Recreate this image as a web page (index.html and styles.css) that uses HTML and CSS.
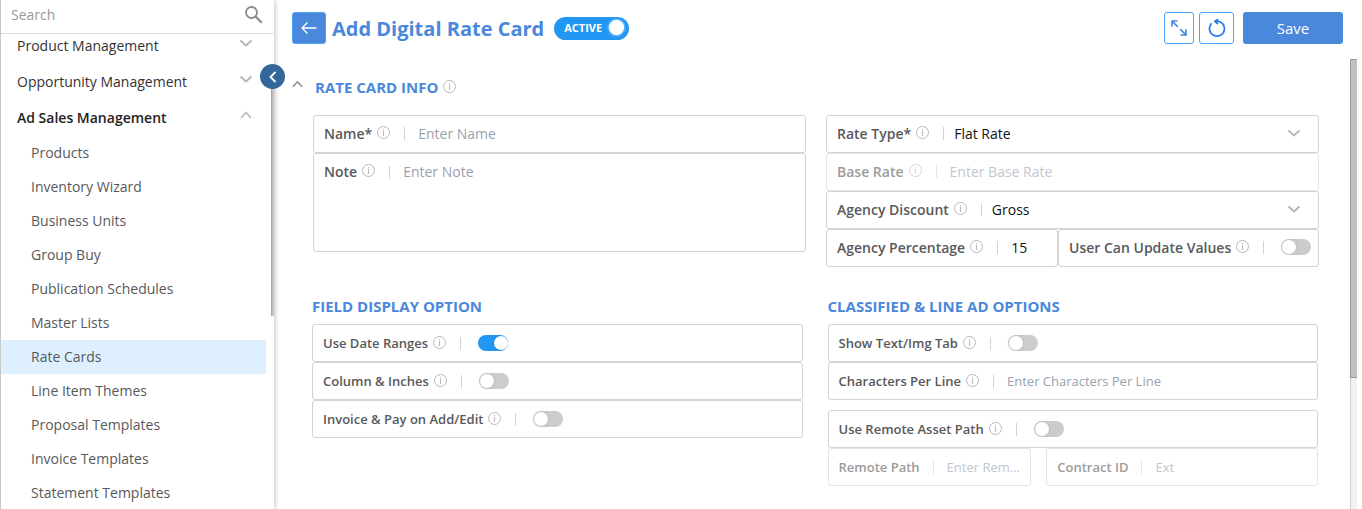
FILE: index.html
```html
<!DOCTYPE html>
<html lang="en">
<head>
    <meta charset="UTF-8">
    <meta name="viewport" content="width=device-width, initial-scale=1.0">
    <title>Add Digital Rate Card</title>
    <link rel="stylesheet" href="styles.css">
</head>
<body>
    <!-- shared icons -->
    <svg class="sprite" aria-hidden="true">
        <symbol id="info" viewBox="0 0 13 13">
            <circle cx="6.500" cy="6.500" r="6" fill="none" stroke="currentColor"/>
            <path d="M6.500 5v5M6.500 3v1.200" fill="none" stroke="currentColor" stroke-width="1.100"/>
        </symbol>
        <symbol id="down" viewBox="0 0 14 8">
            <path d="M1.500 1.500L7 6.500l5.500-5" fill="none" stroke="currentColor" stroke-width="1.900"/>
        </symbol>
        <symbol id="up" viewBox="0 0 12 8">
            <path d="M1 7l5-5.500L11 7" fill="none" stroke="currentColor" stroke-width="1.500"/>
        </symbol>
    </svg>

    <aside class="sidebar">
        <div class="search">
            <input type="search" placeholder="Search" aria-label="Search">
            <svg width="18" height="18" viewBox="0 0 18 18"><circle cx="6.500" cy="6.500" r="5.500" fill="none" stroke="#8c8c8c" stroke-width="1.800"/><path d="M10.500 10.500l6.300 6.300" stroke="#8c8c8c" stroke-width="2.200"/></svg>
        </div>
        <nav class="menu">
            <a class="group" href="#">Product Management <svg class="chev"><use href="#down"/></svg></a>
            <a class="group" href="#">Opportunity Management <svg class="chev"><use href="#down"/></svg></a>
            <a class="group open" href="#">Ad Sales Management <svg class="chev"><use href="#up"/></svg></a>
            <a class="item" href="#">Products</a>
            <a class="item" href="#">Inventory Wizard</a>
            <a class="item" href="#">Business Units</a>
            <a class="item" href="#">Group Buy</a>
            <a class="item" href="#">Publication Schedules</a>
            <a class="item" href="#">Master Lists</a>
            <a class="item selected" href="#">Rate Cards</a>
            <a class="item" href="#">Line Item Themes</a>
            <a class="item" href="#">Proposal Templates</a>
            <a class="item" href="#">Invoice Templates</a>
            <a class="item" href="#">Statement Templates</a>
        </nav>
        <div class="side-thumb"></div>
        <button class="collapse" aria-label="Collapse menu">
            <svg width="8" height="12" viewBox="0 0 8 12"><path d="M6.500 1L1.500 6l5 5" fill="none" stroke="#fff" stroke-width="1.800"/></svg>
        </button>
    </aside>

    <main class="main">
        <header class="topbar">
            <button class="btn back" aria-label="Back">
                <svg width="16" height="12" viewBox="0 0 16 12"><path d="M6.500 .5L1 6l5.500 5.500M1 6h14.500" fill="none" stroke="#fff" stroke-width="1.300"/></svg>
            </button>
            <h1>Add Digital Rate Card</h1>
            <label class="active-switch"><input type="checkbox" checked>ACTIVE</label>
            <div class="actions">
                <button class="btn outline" aria-label="Expand">
                    <svg width="16" height="16" viewBox="0 0 16 16"><path d="M1 6.500V1h5.500M1 1l5.800 5.800M15 9.500V15H9.500M15 15L9.200 9.200" fill="none" stroke="#4a88dc" stroke-width="1.700"/></svg>
                </button>
                <button class="btn outline wide" aria-label="Reset">
                    <svg width="18" height="18" viewBox="0 0 18 18"><path d="M3.500 4.400A7.500 7.500 0 1 0 8 2.100M10.300 0L7 2.300l3 2.700" fill="none" stroke="#2b7de9" stroke-width="1.800"/></svg>
                </button>
                <button class="btn save">Save</button>
            </div>
        </header>

        <div class="content">
            <div class="form">
                <div class="section-head">
                    <button class="toggle-section" aria-label="Collapse section"><svg class="chev-sm"><use href="#up"/></svg></button>
                    <h2>RATE CARD INFO</h2>
                    <svg class="info"><use href="#info"/></svg>
                </div>

                <div class="cols info-cols">
                    <div class="col">
                        <div class="field">
                            <label for="name">Name*</label><svg class="info"><use href="#info"/></svg>
                            <input type="text" id="name" placeholder="Enter Name">
                        </div>
                        <div class="field note">
                            <label for="note">Note</label><svg class="info"><use href="#info"/></svg>
                            <textarea id="note" placeholder="Enter Note"></textarea>
                        </div>
                    </div>
                    <div class="col">
                        <div class="field">
                            <label for="rateType">Rate Type*</label><svg class="info"><use href="#info"/></svg>
                            <select id="rateType"><option>Flat Rate</option></select>
                            <svg class="chev"><use href="#down"/></svg>
                        </div>
                        <div class="field disabled">
                            <label for="baseRate">Base Rate</label><svg class="info"><use href="#info"/></svg>
                            <input type="text" id="baseRate" placeholder="Enter Base Rate" disabled>
                        </div>
                        <div class="field">
                            <label for="discount">Agency Discount</label><svg class="info"><use href="#info"/></svg>
                            <select id="discount"><option>Gross</option></select>
                            <svg class="chev"><use href="#down"/></svg>
                        </div>
                        <div class="agency">
                            <div class="field">
                                <label for="percent">Agency Percentage</label><svg class="info"><use href="#info"/></svg>
                                <input type="text" id="percent" value="15">
                            </div>
                            <div class="field">
                                <label for="canUpdate">User Can Update Values</label><svg class="info"><use href="#info"/></svg>
                                <input type="checkbox" class="switch" id="canUpdate">
                            </div>
                        </div>
                    </div>
                </div>

                <div class="cols option-cols">
                    <div class="col">
                        <h2>FIELD DISPLAY OPTION</h2>
                        <div class="field">
                            <label for="dateRanges">Use Date Ranges</label><svg class="info"><use href="#info"/></svg>
                            <input type="checkbox" class="switch" id="dateRanges" checked>
                        </div>
                        <div class="field">
                            <label for="inches">Column &amp; Inches</label><svg class="info"><use href="#info"/></svg>
                            <input type="checkbox" class="switch" id="inches">
                        </div>
                        <div class="field">
                            <label for="invoicePay">Invoice &amp; Pay on Add/Edit</label><svg class="info"><use href="#info"/></svg>
                            <input type="checkbox" class="switch" id="invoicePay">
                        </div>
                    </div>
                    <div class="col">
                        <h2>CLASSIFIED &amp; LINE AD OPTIONS</h2>
                        <div class="field">
                            <label for="textTab">Show Text/Img Tab</label><svg class="info"><use href="#info"/></svg>
                            <input type="checkbox" class="switch" id="textTab">
                        </div>
                        <div class="field">
                            <label for="chars">Characters Per Line</label><svg class="info"><use href="#info"/></svg>
                            <input type="text" id="chars" placeholder="Enter Characters Per Line">
                        </div>
                        <div class="field spaced">
                            <label for="remoteAsset">Use Remote Asset Path</label><svg class="info"><use href="#info"/></svg>
                            <input type="checkbox" class="switch" id="remoteAsset">
                        </div>
                        <div class="remote">
                            <div class="field disabled">
                                <label for="remotePath">Remote Path</label>
                                <input type="text" id="remotePath" placeholder="Enter Remote Path" disabled>
                            </div>
                            <div class="field disabled">
                                <label for="contract">Contract ID</label>
                                <input type="text" id="contract" placeholder="Ext" disabled>
                            </div>
                        </div>
                    </div>
                </div>
            </div>
            <div class="track"><div class="thumb"></div></div>
        </div>
    </main>
</body>
</html>
```
FILE: styles.css
```css
* {
    box-sizing: border-box;
}
body {
    margin: 0;
    height: 100vh;
    display: flex;
    overflow: hidden;
    background: #fff;
    color: #58595b;
    font-family: "Open Sans", Arial, sans-serif;
    font-size: 14px;
}
input, select, textarea, button {
    font: inherit;
}
a {
    color: inherit;
    text-decoration: none;
}
button {
    padding: 0;
    border: none;
    background: none;
    cursor: pointer;
}
.sprite {
    position: absolute;
    width: 0;
    height: 0;
}

/* sidebar */
.sidebar {
    position: relative;
    z-index: 1;
    flex: 0 0 274px;
    display: flex;
    flex-direction: column;
    border-left: 1px solid #c8c8c8;
    box-shadow: 1px 0 5px rgba(0,0,0,0.25);
    background: #fff;
}
.search {
    position: relative;
    z-index: 1;
    flex: none;
    display: flex;
    align-items: center;
    height: 34px;
    padding: 0 11px 4px 10px;
    border-bottom: 1px solid #ddd;
    background: #fff;
}
.search input {
    flex: 1;
    min-width: 0;
    padding: 0;
    border: none;
    outline: none;
}
.search input::placeholder {
    color: #999;
}
.menu {
    margin-top: -6px;
    flex: 1;
    min-height: 0;
    overflow: hidden;
}
.group {
    display: flex;
    justify-content: space-between;
    align-items: center;
    height: 36px;
    padding: 0 21px 2px 16px;
    color: #333;
}
.group .chev {
    margin-bottom: 4px;
}
.group.open {
    font-weight: 600;
    color: #222;
}
.item {
    display: block;
    height: 34px;
    margin-right: 8px;
    padding-left: 30px;
    line-height: 34px;
}
.item.selected {
    background: #def0ff;
}
.chev {
    flex: none;
    width: 14px;
    height: 8px;
    color: #b5b5b5;
}
.side-thumb {
    position: absolute;
    top: 76px;
    right: 0;
    width: 3px;
    height: 240px;
    background: #c1c1c1;
    border-left: 1px solid #a8a8a8;
}
.collapse {
    position: absolute;
    top: 64px;
    right: -11px;
    width: 25px;
    height: 25px;
    display: flex;
    justify-content: center;
    align-items: center;
    border-radius: 50%;
    background: #336699;
}

/* header */
.main {
    flex: 1;
    min-width: 0;
    display: flex;
    flex-direction: column;
    padding-right: 5px;
}
.topbar {
    flex: none;
    display: flex;
    align-items: center;
    height: 59px;
    padding: 0 14px 3px 18px;
}
h1 {
    margin: 0 10px 0 6px;
    font-size: 20px;
    font-weight: 700;
    color: #4a88dc;
    white-space: nowrap;
}
.btn {
    display: flex;
    justify-content: center;
    align-items: center;
    height: 32px;
    border-radius: 3px;
}
.back {
    width: 34px;
    border: 1px solid #4da3f5;
    background: #4a88dc;
}
.active-switch {
    display: flex;
    flex-direction: row-reverse;
    align-items: center;
    justify-content: space-between;
    width: 75px;
    height: 23px;
    padding: 0 5px 2px 10px;
    border-radius: 12px;
    background: #2196f3;
    color: #fff;
    font-size: 11px;
    font-weight: 700;
}
.active-switch input {
    appearance: none;
    width: 15px;
    height: 15px;
    margin: 0;
    border-radius: 50%;
    background: #fff;
    box-shadow: 0 0 3px #fff;
}
.actions {
    display: flex;
    gap: 5px;
    margin-left: auto;
}
.outline {
    width: 30px;
    border: 1px solid #4da3f5;
    background: #fff;
}
.outline.wide {
    width: 35px;
}
.save {
    width: 100px;
    margin-left: 4px;
    background: #4a88dc;
    color: #fff;
    font-size: 15px;
}

/* form */
.content {
    flex: 1;
    min-height: 0;
    display: flex;
}
.form {
    flex: 1;
    min-width: 0;
    padding: 18px 31px 0 18px;
}
.track {
    width: 7px;
    border-left: 1px solid #d0d0d0;
    background: #f1f1f1;
}
.thumb {
    height: 319px;
    margin-left: -1px;
    border: solid #999;
    border-width: 1px 0 1px 1px;
    background: #c1c1c1;
}
h2 {
    margin: 0;
    font-size: 15px;
    line-height: 20px;
    font-weight: 700;
    color: #4a88dc;
}
.section-head {
    display: flex;
    align-items: center;
    height: 20px;
}
.section-head .info {
    margin-bottom: 1px;
}
.toggle-section {
    display: flex;
    width: 23px;
    margin-bottom: 6px;
}
.chev-sm {
    width: 11px;
    height: 8px;
    color: #888;
}
.info {
    flex: none;
    width: 13px;
    height: 13px;
    margin-left: 5px;
    color: #b8b8b8;
}
.cols {
    display: grid;
    grid-template-columns: minmax(0, 1fr) minmax(0, 1fr);
}
.info-cols {
    gap: 20px;
    margin: 18px 0 0 21px;
}
.option-cols {
    gap: 25px;
    margin: 29px 1px 0 20px;
    font-size: 13px;
}
.option-cols h2 {
    margin-bottom: 8px;
}
.field {
    display: flex;
    align-items: center;
    height: 38px;
    padding: 0 10px;
    border: 1px solid #d3d3d3;
    border-radius: 3px;
}
.info-cols .field {
    padding-bottom: 2px;
}
.field label {
    font-weight: 600;
    white-space: nowrap;
}
.field .info {
    margin-bottom: 2px;
}
/* the divider before each value is painted as a 1px background */
.field input, .field select, .field textarea {
    flex: 1;
    min-width: 0;
    height: 20px;
    margin: 0 0 0 14px;
    padding: 0 0 0 14px;
    border: none;
    outline: none;
    background: linear-gradient(#d3d3d3, #d3d3d3) 0 4px / 1px 13px no-repeat;
    color: #111;
    resize: none;
    text-overflow: ellipsis;
}
.field select {
    appearance: none;
    padding-left: 11px;
}
.field ::placeholder {
    color: #9a9fb0;
}
.field .chev {
    margin-right: 7px;
}
.field.note {
    align-items: flex-start;
    height: 99px;
    padding-top: 8px;
}
.note label {
    line-height: 19px;
}
.note .info {
    margin-top: 2px;
}
.field.note textarea {
    height: 80px;
    line-height: 20px;
}
.disabled {
    opacity: 0.6;
}
.spaced {
    margin-top: 10px;
}
.agency {
    display: grid;
    grid-template-columns: minmax(0, 232fr) minmax(0, 261fr);
}
.remote {
    display: grid;
    grid-template-columns: minmax(0, 3fr) minmax(0, 4fr);
    gap: 15px;
}
.remote .field {
    padding-right: 4px;
}
.remote input {
    margin-left: 13px;
}

/* on/off switch, its left strip holds the divider */
.field input.switch {
    appearance: none;
    position: relative;
    flex: 0 0 48px;
    height: 16px;
    padding: 0;
    background-position: 0 2px;
    cursor: pointer;
}
.switch::before {
    content: "";
    position: absolute;
    top: 0;
    right: 0;
    width: 30px;
    height: 16px;
    border-radius: 8px;
    background: #ccc;
}
.switch::after {
    content: "";
    position: absolute;
    top: 1px;
    right: 15px;
    width: 14px;
    height: 14px;
    border-radius: 50%;
    background: #fff;
    box-shadow: 0 0 3px rgba(0,0,0,0.15);
}
.switch:checked::before {
    background: #2196f3;
}
.switch:checked::after {
    right: 0;
}
```
